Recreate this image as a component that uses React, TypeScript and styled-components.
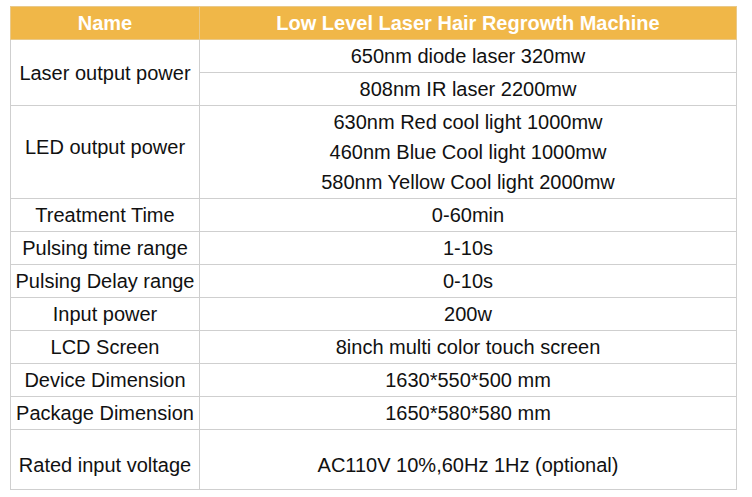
import React from "react";
import styled, { createGlobalStyle } from "styled-components";

const GlobalStyle = createGlobalStyle`
  body {
    margin: 0;
    background: #fff;
    font-family: "Liberation Sans", Arial, sans-serif;
  }
`;

const Page = styled.div`
  padding: 6px 0 0 10px;
`;

const SpecTable = styled.table`
  width: 727px;
  border-collapse: collapse;
  table-layout: fixed;
  font-size: 20px;
  color: #111;
`;

const HeadCell = styled.th`
  height: 32px;
  padding: 0;
  background: #f0b748;
  border: 1px solid #e9c98a;
  color: #fff;
  font-weight: bold;
  text-align: center;
  vertical-align: middle;
`;

// $top / $bottom nudge the text off the vertical centre, as in the original page
const Cell = styled.td<{ $h?: number; $top?: number; $bottom?: number }>`
  height: ${(p) => p.$h ?? 32}px;
  padding: ${(p) => p.$top ?? 0}px 0 ${(p) => p.$bottom ?? 0}px;
  border: 1px solid #cfcfcf;
  text-align: center;
  vertical-align: middle;
  line-height: 30px;
  white-space: nowrap;
`;

const Line = styled.div`
  line-height: 30px;
`;

type Row = { name: string; value: string };

const simpleRows: Row[] = [
  { name: "Treatment Time", value: "0-60min" },
  { name: "Pulsing time range", value: "1-10s" },
  { name: "Pulsing Delay range", value: "0-10s" },
  { name: "Input power", value: "200w" },
  { name: "LCD Screen", value: "8inch multi color touch screen" },
  { name: "Device Dimension", value: "1630*550*500 mm" },
  { name: "Package Dimension", value: "1650*580*580 mm" },
];

const ledLines = [
  "630nm Red cool light 1000mw",
  "460nm Blue Cool light 1000mw",
  "580nm Yellow Cool light 2000mw",
];

export default function App() {
  return (
    <>
      <GlobalStyle />
      <Page>
        <SpecTable>
          <colgroup>
            <col style={{ width: 189 }} />
            <col />
          </colgroup>
          <thead>
            <tr>
              <HeadCell>Name</HeadCell>
              <HeadCell>Low Level Laser Hair Regrowth Machine</HeadCell>
            </tr>
          </thead>
          <tbody>
            <tr>
              <Cell rowSpan={2}>Laser output power</Cell>
              <Cell>650nm diode laser 320mw</Cell>
            </tr>
            <tr>
              <Cell>808nm IR laser 2200mw</Cell>
            </tr>
            <tr>
              <Cell $h={82} $bottom={10}>LED output power</Cell>
              <Cell $h={92}>
                {ledLines.map((l) => (
                  <Line key={l}>{l}</Line>
                ))}
              </Cell>
            </tr>
            {simpleRows.map((r) => (
              <tr key={r.name}>
                <Cell>{r.name}</Cell>
                <Cell>{r.value}</Cell>
              </tr>
            ))}
            <tr>
              <Cell $h={49} $top={10}>Rated input voltage</Cell>
              <Cell $h={49} $top={10}>AC110V 10%,60Hz 1Hz (optional)</Cell>
            </tr>
          </tbody>
        </SpecTable>
      </Page>
    </>
  );
}
